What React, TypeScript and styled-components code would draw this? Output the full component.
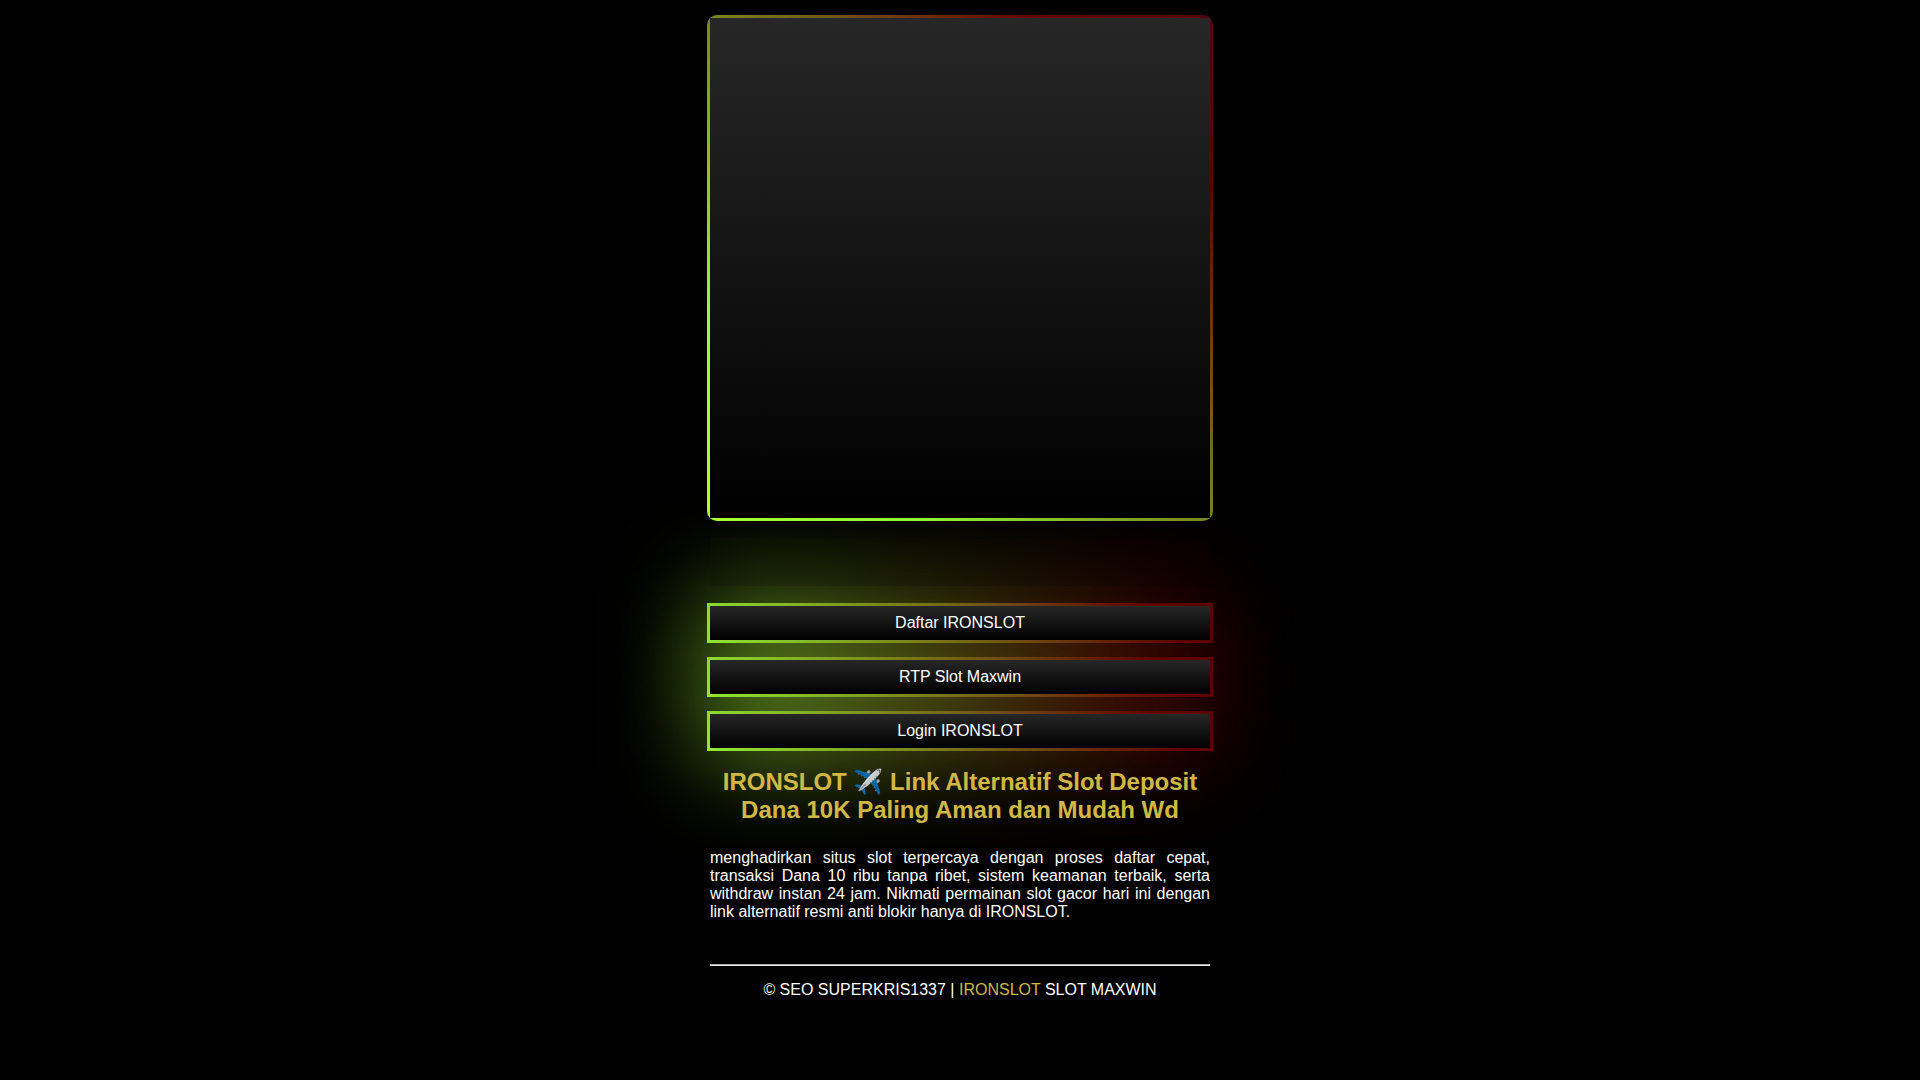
import React from "react";
import styled, { createGlobalStyle, css } from "styled-components";

const GlobalStyle = createGlobalStyle`
  body {
    margin: 0;
    background: #000;
    color: #fff;
    font-family: Arial, "Liberation Sans", sans-serif;
    font-size: 16px;
    line-height: 18px;
  }
`;

const panel = "linear-gradient(0deg, #000, #272727)";

const frame = css`
  content: "";
  position: absolute;
  inset: -3px;
  z-index: -1;
`;

const Page = styled.main`
  display: flex;
  flex-direction: column;
  width: 100%;
  max-width: 500px;
  margin: 0 auto;
  padding: 18px 0;
`;

const Banner = styled.section`
  position: relative;
  aspect-ratio: 1;
  background: ${panel};

  &::before {
    ${frame}
    border-radius: 10px;
    background: linear-gradient(45deg, #adff2f, #94ff38 146px, #600000 594px, #50060c);
  }
`;

const Shade = styled.div`
  height: 48px;
  margin: 20px 0;
  background:
    linear-gradient(180deg, rgba(0, 0, 0, 0), rgba(0, 0, 0, 0.24)),
    linear-gradient(90deg, rgba(148, 255, 56, 0.015), rgba(96, 0, 0, 0.03));
`;

const Links = styled.nav`
  display: flex;
  flex-direction: column;
  gap: 20px;
`;

const GlowLink = styled.a`
  position: relative;
  padding: 8px;
  background: ${panel};
  color: #fff;
  text-align: center;
  text-decoration: none;

  &::before,
  &::after {
    ${frame}
    background: linear-gradient(45deg, #94ff38 -20px, #600000 340px, #5a0002);
  }

  &::after {
    filter: blur(50px);
  }
`;

const Title = styled.h1`
  margin: 20px 0 25px;
  color: #d1b845;
  font-size: 24px;
  line-height: 28px;
  text-align: center;
`;

const Intro = styled.p`
  margin: 0;
  text-align: justify;
`;

const Divider = styled.hr`
  width: 100%;
  box-sizing: border-box;
  margin: 43px 0 15px;
  border: 1px solid;
  border-color: #aaa #eee #eee #aaa;
`;

const Footer = styled.footer`
  text-align: center;
`;

const BrandLink = styled.a`
  color: #d1b845;
  text-decoration: none;
`;

const links = ["Daftar IRONSLOT", "RTP Slot Maxwin", "Login IRONSLOT"];

export default function App() {
  return (
    <>
      <GlobalStyle />
      <Page>
        <Banner aria-label="Banner" />
        <Shade />
        <Links>
          {links.map((label) => (
            <GlowLink key={label} href="#">
              {label}
            </GlowLink>
          ))}
        </Links>
        <Title>IRONSLOT ✈️ Link Alternatif Slot Deposit Dana 10K Paling Aman dan Mudah Wd</Title>
        <Intro>
          menghadirkan situs slot terpercaya dengan proses daftar cepat, transaksi Dana 10 ribu
          tanpa ribet, sistem keamanan terbaik, serta withdraw instan 24 jam. Nikmati permainan
          slot gacor hari ini dengan link alternatif resmi anti blokir hanya di IRONSLOT.
        </Intro>
        <Divider />
        <Footer>
          © SEO SUPERKRIS1337 | <BrandLink href="#">IRONSLOT</BrandLink> SLOT MAXWIN
        </Footer>
      </Page>
    </>
  );
}
